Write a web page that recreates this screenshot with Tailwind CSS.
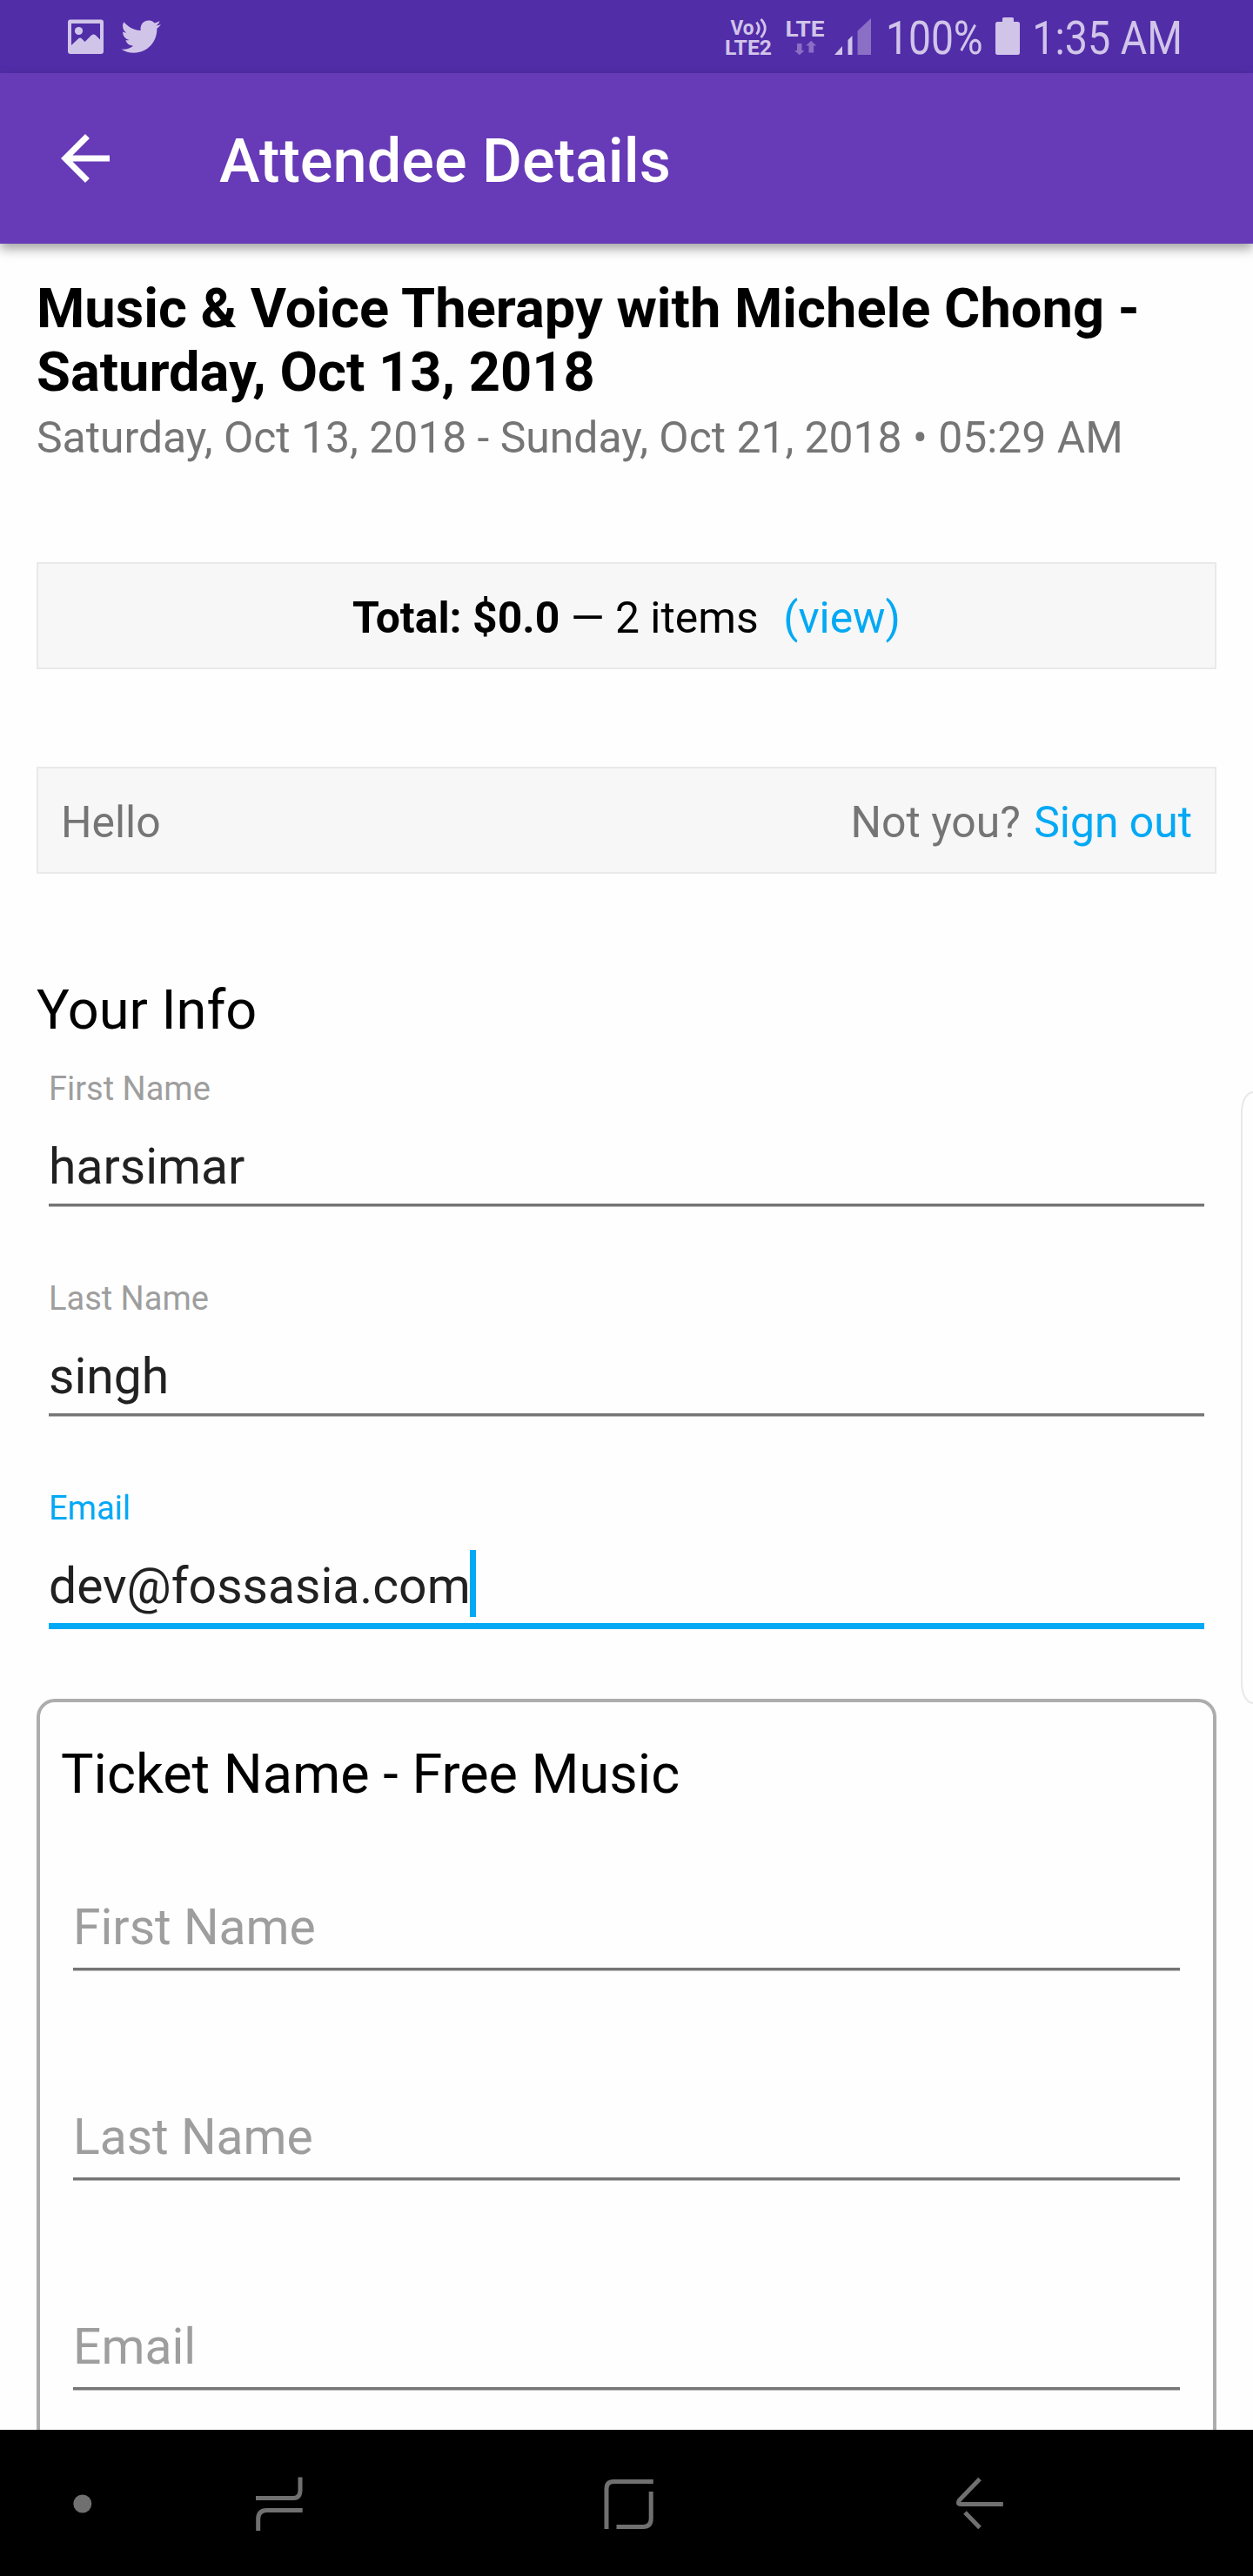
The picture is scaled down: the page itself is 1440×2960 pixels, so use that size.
<!DOCTYPE html>
<html lang="en">
<head>
<meta charset="utf-8">
<title>Attendee Details</title>
<script src="https://cdn.jsdelivr.net/npm/@tailwindcss/browser@4"></script>
</head>
<body class="bg-[#fefefe] font-['Roboto',sans-serif] text-black">
<div class="relative flex h-[2960px] w-[1440px] flex-col overflow-hidden">

  <!-- Status bar -->
  <div class="h-[84px] shrink-0 bg-[#512da8]">
    <svg class="block" width="1440" height="84" viewBox="0 0 1440 84" fill="#d1c4e9" font-family="Roboto, sans-serif">
      <path fill-rule="evenodd" d="M81 22.5h35a3 3 0 0 1 3 3V59a3 3 0 0 1-3 3H81a3 3 0 0 1-3-3V25.500a3 3 0 0 1 3-3zM82 27v25l8.500-8q1.500-1 3 0l4 4 7.500-7.500q2.500-2 5 0l5 5V27z"/>
      <circle cx="90.500" cy="35.500" r="4.600"/>
      <path transform="translate(139.200 19.200) scale(1.910)" d="M23.950 4.570a10 10 0 0 1-2.820.77 4.960 4.960 0 0 0 2.160-2.720c-.95.560-2.010.96-3.130 1.180a4.920 4.920 0 0 0-8.380 4.480C7.690 8.100 4.070 6.130 1.640 3.160a4.820 4.820 0 0 0-.67 2.480c0 1.710.87 3.210 2.190 4.100a4.900 4.900 0 0 1-2.230-.62v.06a4.920 4.920 0 0 0 3.950 4.830 5 5 0 0 1-2.210.08 4.940 4.940 0 0 0 4.600 3.420A9.870 9.870 0 0 1 0 19.540a13.990 13.990 0 0 0 7.550 2.210c9.050 0 14-7.500 14-13.980 0-.21 0-.42-.02-.63a9.940 9.940 0 0 0 2.420-2.570z"/>
      <text x="839.500" y="39.500" font-size="23" font-weight="700" textLength="27" lengthAdjust="spacingAndGlyphs">Vo</text>
      <g fill="none" stroke="#d1c4e9" stroke-width="2.800">
        <path d="M869.500 25.500q5.500 7 0 14"/>
        <path d="M874.500 22q9.500 10.500 0 21"/>
      </g>
      <text x="833" y="63" font-size="24" font-weight="700" textLength="54" lengthAdjust="spacingAndGlyphs">LTE2</text>
      <text x="902.500" y="41.500" font-size="26.500" font-weight="700" textLength="45" lengthAdjust="spacingAndGlyphs">LTE</text>
      <path fill="#8a6fc5" d="M916 50h5.500v8h3l-5.700 5.300-5.800-5.300h3zM929.500 60.500v-8h-3.200l5.800-5.700 6 5.700h-3v8z"/>
      <path d="M959 63l9-10v10zM974.500 63V46l5-5v22z"/>
      <path fill="#8a6fc5" d="M985.500 63V35.500L1001 21v42z"/>
      <text x="1018" y="62.300" font-size="53.400" textLength="111.700" lengthAdjust="spacingAndGlyphs">100%</text>
      <path d="M1153.500 20h10q1.500 0 1.500 1.500V25h4.500q2.500 0 2.500 2.500V61q0 2-2.500 2h-23q-2.500 0-2.500-2V27.500q0-2.500 2.500-2.500h5.500v-3.500q0-1.500 1.500-1.500z"/>
      <text x="1186.300" y="62.300" font-size="53.400" textLength="172.600" lengthAdjust="spacingAndGlyphs">1:35 AM</text>
    </svg>
  </div>

  <!-- App bar -->
  <header class="relative flex h-[196px] shrink-0 items-center bg-[#673ab7] pl-14 text-white shadow-[0_6px_12px_rgba(0,0,0,0.36)]">
    <svg class="size-[84px]" viewBox="0 0 24 24" fill="currentColor"><path d="M20 11H7.830l5.590-5.590L12 4l-8 8 8 8 1.410-1.410L7.830 13H20v-2z"/></svg>
    <h1 class="ml-28 pt-[5px] text-[70.300px] leading-[82px] font-medium">Attendee Details</h1>
  </header>

  <!-- Form -->
  <main class="flex min-h-0 flex-1 flex-col overflow-hidden px-[42px] pt-[38px] *:shrink-0">
    <h2 class="text-[63.200px] leading-[73px] font-bold">Music &amp; Voice Therapy with Michele Chong -<br>Saturday, Oct 13, 2018</h2>
    <p class="mt-[11px] text-[49.850px] leading-[57px] text-[#757575]">Saturday, Oct 13, 2018 - Sunday, Oct 21, 2018 • 05:29 AM</p>

    <div class="mt-[114px] flex h-[123px] items-center justify-center border-2 border-[#e9e9e9] bg-[#f7f7f7] pt-[5px] text-[49.850px] leading-[57px] whitespace-pre"><b>Total: $0.0</b><span> — 2 items  </span><a class="ml-1 text-[#03a9f4]">(view)</a></div>

    <div class="mt-[112px] flex h-[123px] items-center justify-between border-2 border-[#e9e9e9] bg-[#f7f7f7] px-[26px] pt-[5px] text-[49.850px] leading-[57px] text-[#757575]">
      <span>Hello</span>
      <span>Not you? <a class="ml-[3px] text-[#03a9f4]">Sign out</a></span>
    </div>

    <h3 class="mt-[120px] text-[63px] leading-[74px]">Your Info</h3>

    <div class="mt-[30px] flex flex-col px-3.5">
      <div class="h-[241px]">
        <div class="text-[38px] leading-[47px] text-[#9e9e9e]">First Name</div>
        <div class="mt-8 h-[67px] text-[57px] leading-[67px] text-[#212121]">harsimar</div>
        <div class="mt-[9px] h-1 border-b border-[#bababa] bg-[#757575]"></div>
      </div>
      <div class="h-[241px]">
        <div class="text-[38px] leading-[47px] text-[#9e9e9e]">Last Name</div>
        <div class="mt-8 h-[67px] text-[57px] leading-[67px] text-[#212121]">singh</div>
        <div class="mt-[9px] h-1 border-b border-[#bababa] bg-[#757575]"></div>
      </div>
      <div class="h-[242px]">
        <div class="text-[38px] leading-[47px] text-[#03a9f4]">Email</div>
        <div class="mt-8 flex h-[67px] items-start text-[57px] leading-[67px] text-[#212121]">dev@fossasia.com<span class="-mt-2 -ml-px h-[77px] w-[7px] bg-[#03a9f4]"></span></div>
        <div class="mt-[9px] h-[7px] bg-[#03a9f4]"></div>
      </div>
    </div>

    <section class="h-[900px] rounded-[21px] border-4 border-[#adadad] pt-[46px]">
      <h3 class="pl-[24px] text-[63px] leading-[74px]">Ticket Name - Free Music</h3>
      <div class="px-[38px] text-[57px] leading-[67px] text-[#9e9e9e]">
        <div class="h-[241px] pt-[105px]">
          <div>First Name</div>
          <div class="mt-[13px] h-1 border-b border-[#bababa] bg-[#757575]"></div>
        </div>
        <div class="h-[241px] pt-[105px]">
          <div>Last Name</div>
          <div class="mt-[13px] h-1 border-b border-[#bababa] bg-[#757575]"></div>
        </div>
        <div class="h-[241px] pt-[105px]">
          <div>Email</div>
          <div class="mt-[13px] h-1 border-b border-[#bababa] bg-[#757575]"></div>
        </div>
      </div>
    </section>
  </main>

  <!-- Edge panel handle -->
  <div class="absolute top-[1254px] -right-4 h-[704px] w-[30px] rounded-[14px/24px] border-2 border-[#e8e8e8] bg-[#fefefe]"></div>

  <!-- Navigation bar -->
  <nav class="h-[168px] shrink-0 bg-black">
    <svg class="block" width="1440" height="168" viewBox="0 2792 1440 168" fill="none" stroke="#707070" stroke-width="5">
      <circle cx="94.800" cy="2877" r="10.500" fill="#707070" stroke="none"/>
      <path d="M294 2870.500h43.500q7.500 0 7.500-9.500v-14.500M347.700 2884.500h-41q-10 0-10 10V2908"/>
      <path d="M697 2906v-46q0-8.500 8-8.500h45.800M748.200 2863v31q0 9.500-9 9.500h-30.700"/>
      <path d="M1126 2848.500l-23.200 24q-3.500 5 1.500 5h48.500M1109 2887l17 17.500"/>
    </svg>
  </nav>
</div>
</body>
</html>
